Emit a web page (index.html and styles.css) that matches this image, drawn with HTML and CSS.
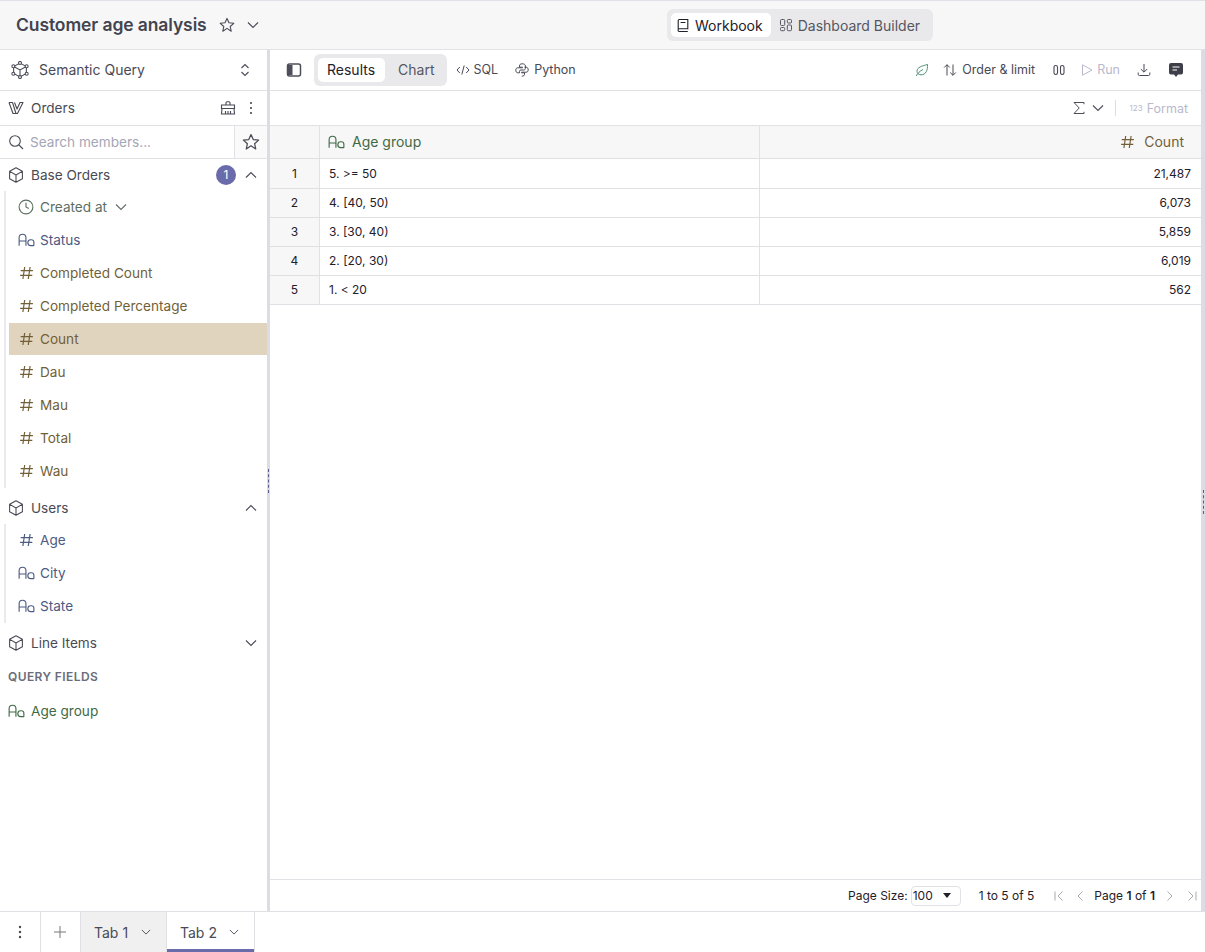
FILE: index.html
```html
<!DOCTYPE html>
<html lang="en">
<head>
  <meta charset="UTF-8">
  <title>Customer age analysis</title>
  <link rel="stylesheet" href="styles.css">
</head>
<body>
  <svg class="defs" width="0" height="0">
    <symbol id="i-hash" viewBox="0 0 16 16"><path d="M6.2 2 4.4 14M11.6 2 9.8 14M2.2 5.600h12.200M1.600 10.400h12.200" fill="none" stroke="currentColor" stroke-width="1.200"/></symbol>
    <symbol id="i-aa" viewBox="0 0 18 16"><path d="M1.200 14V5.500a3.600 3.600 0 0 1 7.200 0V14M1.200 9h7.200M16.800 14v-3.800a2.500 2.500 0 0 0-2.500-2.500h-.8a3.100 3.100 0 0 0 0 6.200h3.300" fill="none" stroke="currentColor" stroke-width="1.200"/></symbol>
    <symbol id="i-cube" viewBox="1 .5 14 15"><path d="M8 1.200 14 4.400v7.200L8 14.800l-6-3.200V4.400ZM2.200 4.600 8 8l5.800-3.400M8 8v6.600" fill="none" stroke="currentColor" stroke-width="1" stroke-linejoin="round"/></symbol>
    <symbol id="i-down" viewBox="0 0 12 12"><path d="M1 3.500l5 5 5-5" fill="none" stroke="currentColor" stroke-width="1.100"/></symbol>
    <symbol id="i-up" viewBox="0 0 12 12"><path d="M1 8.500l5-5 5 5" fill="none" stroke="currentColor" stroke-width="1.100"/></symbol>
    <symbol id="i-star" viewBox="0 0 16 16"><path d="M8 1.400l2 4.400 4.800.5-3.600 3.200 1 4.700L8 11.400l-4.200 2.800 1-4.700L1.200 6.300 6 5.800Z" fill="none" stroke="currentColor" stroke-width="1.100" stroke-linejoin="round"/></symbol>
  </svg>

  <header class="topbar">
    <div class="title-wrap">
      <h1 class="title">Customer age analysis</h1>
      <svg class="ico-16 star-top"><use href="#i-star"/></svg>
      <svg class="ico-12 chev-top"><use href="#i-down"/></svg>
    </div>
    <div class="seg seg-top">
      <div class="seg-item active">
        <svg class="ico-14" viewBox="0 0 14 14"><path d="M2.200 11V2.500a1 1 0 0 1 1-1h8.600v9.200H3.400a1.200 1.200 0 0 0 0 2.800h8.400M4.600 4.500h4.800" fill="none" stroke="currentColor" stroke-width="1.100"/></svg>
        Workbook
      </div>
      <div class="seg-item">
        <svg class="ico-14" viewBox="0 0 14 14"><g fill="none" stroke="currentColor" stroke-width="1"><rect x="1.500" y="1.500" width="4.200" height="6" rx="1"/><rect x="8.300" y="1.500" width="4.200" height="3.500" rx="1"/><rect x="1.500" y="9.500" width="4.200" height="3.200" rx="1"/><rect x="8.300" y="7" width="4.200" height="5.700" rx="1"/></g></svg>
        Dashboard Builder
      </div>
    </div>
  </header>

  <div class="workspace">
    <aside class="sidebar">
      <div class="sb-head">
        <svg class="ico-18" viewBox="1 .5 16 17"><g fill="none" stroke="currentColor" stroke-width="1"><path d="M9 2.500 15 5.700v6.600L9 15.500l-6-3.200V5.700ZM3 5.700 9 9l6-3.300M9 9v6.500"/><circle cx="9" cy="2.300" r="1.400" fill="#fff"/><circle cx="2.700" cy="5.500" r="1.400" fill="#fff"/><circle cx="15.300" cy="5.500" r="1.400" fill="#fff"/><circle cx="2.700" cy="12.500" r="1.400" fill="#fff"/><circle cx="15.300" cy="12.500" r="1.400" fill="#fff"/><circle cx="9" cy="15.700" r="1.400" fill="#fff"/></g></svg>
        <span class="sb-head-label">Semantic Query</span>
        <svg class="ico-12 updown" viewBox="0 0 12 14"><path d="M2.500 5 6 1.500 9.500 5M2.500 9 6 12.500 9.500 9" fill="none" stroke="currentColor" stroke-width="1.100"/></svg>
      </div>

      <div class="sb-model">
        <svg class="ico-16" viewBox="0 0 16 16"><path d="M1 2.500h3.500L8 13.500h1.500L15 2.500h-3l-3 6.500L6.500 2.500M1 2.500 5 13.500h3" fill="none" stroke="currentColor" stroke-width="1.100" stroke-linejoin="round"/></svg>
        <span class="sb-model-label">Orders</span>
        <svg class="ico-16 broom" viewBox="0 0 16 16"><path d="M6 5V2.800a1 1 0 0 1 1-1h2a1 1 0 0 1 1 1V5M1.500 5h13v3.500h-13ZM2 8.500 1.500 14h13L14 8.500M5.500 11v3M8 11v3M10.500 11v3" fill="none" stroke="currentColor" stroke-width="1.100"/></svg>
        <svg class="ico-16" viewBox="0 0 16 16"><g fill="currentColor"><circle cx="8" cy="3" r="1.100"/><circle cx="8" cy="8" r="1.100"/><circle cx="8" cy="13" r="1.100"/></g></svg>
      </div>

      <div class="sb-search">
        <div class="search-box">
          <svg class="ico-16" viewBox="0 0 16 16"><circle cx="7" cy="7" r="5.300" fill="none" stroke="currentColor" stroke-width="1.100"/><path d="M11 11l4 4" stroke="currentColor" stroke-width="1.100"/></svg>
          <span class="placeholder">Search members...</span>
        </div>
        <div class="search-star"><svg class="ico-18"><use href="#i-star"/></svg></div>
      </div>

      <div class="view-head view-first">
        <svg class="ico-16"><use href="#i-cube"/></svg>
        <span class="view-name">Base Orders</span>
        <span class="badge">1</span>
        <svg class="ico-12 view-chev"><use href="#i-up"/></svg>
      </div>
      <ul class="members">
        <li class="member time">
          <svg class="ico-16" viewBox="0 0 16 16"><circle cx="8" cy="8" r="6.900" fill="none" stroke="currentColor" stroke-width="1.100"/><path d="M8 3.800V8l2.800 1.600" fill="none" stroke="currentColor" stroke-width="1.100"/></svg>
          Created at
          <svg class="ico-12 member-chev"><use href="#i-down"/></svg>
        </li>
        <li class="member dim"><svg class="ico-type"><use href="#i-aa"/></svg>Status</li>
        <li class="member meas"><svg class="ico-type"><use href="#i-hash"/></svg>Completed Count</li>
        <li class="member meas"><svg class="ico-type"><use href="#i-hash"/></svg>Completed Percentage</li>
        <li class="member meas selected"><svg class="ico-type"><use href="#i-hash"/></svg>Count</li>
        <li class="member meas"><svg class="ico-type"><use href="#i-hash"/></svg>Dau</li>
        <li class="member meas"><svg class="ico-type"><use href="#i-hash"/></svg>Mau</li>
        <li class="member meas"><svg class="ico-type"><use href="#i-hash"/></svg>Total</li>
        <li class="member meas"><svg class="ico-type"><use href="#i-hash"/></svg>Wau</li>
      </ul>

      <div class="view-head">
        <svg class="ico-16"><use href="#i-cube"/></svg>
        <span class="view-name">Users</span>
        <svg class="ico-12 view-chev"><use href="#i-up"/></svg>
      </div>
      <ul class="members">
        <li class="member dim"><svg class="ico-type"><use href="#i-hash"/></svg>Age</li>
        <li class="member dim"><svg class="ico-type"><use href="#i-aa"/></svg>City</li>
        <li class="member dim"><svg class="ico-type"><use href="#i-aa"/></svg>State</li>
      </ul>

      <div class="view-head">
        <svg class="ico-16"><use href="#i-cube"/></svg>
        <span class="view-name">Line Items</span>
        <svg class="ico-12 view-chev"><use href="#i-down"/></svg>
      </div>

      <div class="sb-section">QUERY FIELDS</div>
      <div class="query-field"><svg class="ico-type"><use href="#i-aa"/></svg>Age group</div>
    </aside>

    <main class="main">
      <div class="toolbar">
        <svg class="ico-16 panel-ico" viewBox="0 0 16 16"><rect x="1.500" y="2" width="13" height="12" rx="2" fill="none" stroke="currentColor" stroke-width="1.500"/><path d="M2 3h4.500v10H2Z" fill="currentColor"/></svg>
        <div class="seg seg-tool">
          <div class="seg-item active">Results</div>
          <div class="seg-item">Chart</div>
        </div>
        <div class="tool tool-sql">
          <svg class="ico-14" viewBox="0 0 14 14"><path d="M3.800 4 1 7l2.800 3M10.200 4 13 7l-2.800 3M8.200 2.500 5.800 11.500" fill="none" stroke="currentColor" stroke-width="1"/></svg>
          SQL
        </div>
        <div class="tool tool-py">
          <svg class="ico-14" viewBox="0 0 14 14"><g fill="none" stroke="currentColor" stroke-width="1"><path id="snake" d="M7.200.8C5.400.8 4.500 1.500 4.500 2.800v1.400H7.500v.6H2.800C1.500 4.800.8 5.700.8 7.200s.7 2.600 2 2.600h1.700V8.300C4.500 7.500 5.100 7 5.900 7h2.800c.9 0 1.700-.7 1.700-1.600V2.800C10.400 1.500 9 .8 7.200.8Z"/><path d="M6.800 13.200c1.800 0 2.700-.7 2.700-2v-1.400H6.500v-.6h4.700c1.300 0 2-.9 2-2.400s-.7-2.600-2-2.600H9.500"/></g></svg>
          Python
        </div>
        <div class="toolbar-right">
          <svg class="ico-14 leaf" viewBox="0 0 14 14"><path d="M12.500 1.500C12.800 7 11 11.800 6 11.800c-2.500 0-4-1.600-4-3.600 0-4 5-5.200 10.500-6.700ZM1.200 13c1.500-3 3.800-5 6.800-6.500" fill="none" stroke="currentColor" stroke-width="1"/></svg>
          <div class="tool tool-order">
            <svg class="ico-14" viewBox="0 0 14 14"><path d="M4 12.500V1.800M1.200 4.500 4 1.700l2.800 2.800M10 1.500v10.700M7.200 9.500l2.800 2.800 2.800-2.800" fill="none" stroke="currentColor" stroke-width="1"/></svg>
            Order &amp; limit
          </div>
          <svg class="ico-14 cols" viewBox="0 0 14 14"><g fill="none" stroke="currentColor" stroke-width="1.100"><rect x="2" y="2.500" width="3.500" height="9" rx="1.700"/><rect x="8.500" y="2.500" width="3.500" height="9" rx="1.700"/></g></svg>
          <div class="tool tool-run">
            <svg class="ico-14" viewBox="0 0 14 14"><path d="M2.500 1.800 12 7l-9.500 5.200Z" fill="none" stroke="currentColor" stroke-width="1"/></svg>
            Run
          </div>
          <svg class="ico-14 dl" viewBox="0 0 14 14"><path d="M7 1v8M3.800 6 7 9.200 10.200 6M1.200 9.500v1.800c0 .8.500 1.200 1.200 1.200h9.200c.7 0 1.200-.4 1.200-1.200V9.500" fill="none" stroke="currentColor" stroke-width="1"/></svg>
          <svg class="ico-16 chat" viewBox="0 0 16 16"><path d="M3 1h10a2 2 0 0 1 2 2v7.500a2 2 0 0 1-2 2h-3L8 15l-2-2.500H3a2 2 0 0 1-2-2V3a2 2 0 0 1 2-2Z" fill="currentColor"/><path d="M4.500 5h7M4.500 8h4.500" stroke="#fff" stroke-width="1.200"/></svg>
        </div>
      </div>

      <div class="subbar">
        <svg class="ico-14 sigma" viewBox="0 0 14 14"><path d="M12 3.200V1.500H2l5.200 5.500L2 12.500h10v-1.700" fill="none" stroke="currentColor" stroke-width="1"/></svg>
        <svg class="ico-12 sigma-chev"><use href="#i-down"/></svg>
        <span class="sub-sep"></span>
        <span class="fmt-123">123</span>
        <span class="fmt-label">Format</span>
      </div>

      <div class="grid">
        <div class="grid-head">
          <div class="cell idx"></div>
          <div class="cell col-a head-a"><svg class="ico-type"><use href="#i-aa"/></svg>Age group</div>
          <div class="cell col-b head-b"><svg class="ico-type"><use href="#i-hash"/></svg>Count</div>
        </div>
        <div class="grid-row"><div class="cell idx">1</div><div class="cell col-a">5. &gt;= 50</div><div class="cell col-b">21,487</div></div>
        <div class="grid-row"><div class="cell idx">2</div><div class="cell col-a">4. [40, 50)</div><div class="cell col-b">6,073</div></div>
        <div class="grid-row"><div class="cell idx">3</div><div class="cell col-a">3. [30, 40)</div><div class="cell col-b">5,859</div></div>
        <div class="grid-row"><div class="cell idx">4</div><div class="cell col-a">2. [20, 30)</div><div class="cell col-b">6,019</div></div>
        <div class="grid-row"><div class="cell idx">5</div><div class="cell col-a">1. &lt; 20</div><div class="cell col-b">562</div></div>
      </div>

      <div class="pager">
        <span>Page Size:</span>
        <span class="page-select">100<i class="caret"></i></span>
        <span class="page-count">1 to 5 of 5</span>
        <svg class="ico-12 page-first" viewBox="0 0 12 12"><path d="M2 1.500v9M9.500 1.500 5 6l4.500 4.500" fill="none" stroke="currentColor" stroke-width="1"/></svg>
        <svg class="ico-12 page-prev" viewBox="0 0 12 12"><path d="M8.500 1.500 4 6l4.500 4.500" fill="none" stroke="currentColor" stroke-width="1"/></svg>
        <span class="page-label">Page <b>1</b> of <b>1</b></span>
        <svg class="ico-12 page-next" viewBox="0 0 12 12"><path d="M3.500 1.500 8 6l-4.500 4.500" fill="none" stroke="currentColor" stroke-width="1"/></svg>
        <svg class="ico-12 page-last" viewBox="0 0 12 12"><path d="M10 1.500v9M2.500 1.500 7 6l-4.500 4.500" fill="none" stroke="currentColor" stroke-width="1"/></svg>
      </div>
    </main>
  </div>

  <footer class="tabbar">
    <div class="tab-btn"><svg class="ico-16" viewBox="0 0 16 16"><g fill="currentColor"><circle cx="8" cy="3" r="1.200"/><circle cx="8" cy="8" r="1.200"/><circle cx="8" cy="13" r="1.200"/></g></svg></div>
    <div class="tab-btn tab-add"><svg class="ico-14" viewBox="0 0 14 14"><path d="M7 1v12M1 7h12" stroke="currentColor" stroke-width="1"/></svg></div>
    <div class="tab">Tab 1<svg class="tab-chev"><use href="#i-down"/></svg></div>
    <div class="tab tab-active">Tab 2<svg class="tab-chev"><use href="#i-down"/></svg></div>
  </footer>
</body>
</html>
```

FILE: styles.css
```css
* { box-sizing: border-box; }
html, body { height: 100%; }
body {
  margin: 0;
  height: 952px;
  display: flex;
  flex-direction: column;
  overflow: hidden;
  background: #fff;
  font-family: Inter, "Liberation Sans", sans-serif;
  font-size: 14px;
  color: #494a55;
}
.defs { position: absolute; }
svg { display: block; flex: none; }
.ico-12 { width: 12px; height: 12px; }
.ico-14 { width: 14px; height: 14px; }
.ico-16 { width: 16px; height: 16px; }
.ico-18 { width: 18px; height: 18px; }
.ico-type { width: 17px; height: 16px; }

/* top bar */
.topbar {
  height: 50px;
  flex: none;
  display: flex;
  align-items: center;
  position: relative;
  background: #f7f7f8;
  border-top: 1px solid #dfe0e8;
  border-bottom: 1px solid #e2e2e6;
  padding-left: 16px;
}
.title-wrap { display: flex; align-items: center; }
.title { margin: 0 0 2px; font-size: 17.5px; font-weight: 600; color: #43444f; letter-spacing: -0.1px; }
.star-top { margin-left: 12px; }
.chev-top { margin-left: 12px; }
.seg { display: flex; background: #e9e9ec; border-radius: 6px; }
.seg-top {
  position: absolute;
  left: 667px;
  top: 8px;
  height: 32px;
  padding: 4px;
  gap: 3px;
}
.seg-item {
  display: flex;
  align-items: center;
  gap: 5px;
  padding: 0 8px 0 5px;
  border-radius: 5px;
  color: #55565f;
}
.seg-item + .seg-item { padding-right: 9px; }
.seg-item.active { background: #fff; color: #1f2029; }

/* layout */
.workspace { flex: 1; display: flex; min-height: 0; }
.sidebar {
  width: 270px;
  flex: none;
  position: relative;
  border-right: 3px solid #dcdce4;
  background: #fff;
}
.sidebar::after {
  content: "";
  position: absolute;
  right: -2px;
  top: 419px;
  height: 24px;
  border-left: 1px dashed #5a5b8c;
}
.main {
  flex: 1;
  min-width: 0;
  position: relative;
  display: flex;
  flex-direction: column;
  border-right: 4px solid #dcdce4;
}
.main::after {
  content: "";
  position: absolute;
  right: -3px;
  top: 440px;
  height: 24px;
  border-left: 1px dashed #5a5b8c;
}

/* sidebar */
.sb-head {
  height: 41px;
  display: flex;
  align-items: center;
  padding: 0 16px 1px 11px;
  border-bottom: 1px solid #e2e2e6;
}
.sb-head-label { margin-left: 10px; flex: 1; }
.updown { height: 14px; }
.sb-model, .sb-search, .view-head, .member, .query-field { font-size: 13.6px; }
.sb-model {
  height: 35px;
  display: flex;
  align-items: center;
  padding: 0 8px;
  border-bottom: 1px solid #e2e2e6;
}
.sb-model-label { margin-left: 7px; flex: 1; }
.broom { margin-right: 7px; }
.sb-search { height: 33px; display: flex; border-bottom: 1px solid #e2e2e6; }
.search-box {
  flex: 1;
  display: flex;
  align-items: center;
  gap: 6px;
  padding-left: 8px;
  border-right: 1px solid #e2e2e6;
}
.placeholder { color: #a5a6b5; }
.search-star {
  width: 32px;
  display: flex;
  align-items: center;
  justify-content: center;
  background: #fafafa;
}
.view-head {
  height: 32px;
  margin-top: 4px;
  display: flex;
  align-items: center;
  padding: 0 10px 0 8px;
}
.view-first { margin-top: 0; }
.view-name { margin-left: 7px; flex: 1; }
.badge {
  width: 20px;
  height: 20px;
  margin-right: 9px;
  border-radius: 50%;
  background: #6a6bab;
  color: #fff;
  font-size: 12px;
  line-height: 20px;
  text-align: center;
}
.members {
  list-style: none;
  margin: 0 0 0 4px;
  padding: 0;
  border-left: 2px solid #e9e9ee;
}
.member {
  height: 33px;
  margin-left: 3px;
  padding: 0 0 1px 9px;
  display: flex;
  align-items: center;
  gap: 5px;
}
.member.time { color: #5c6e62; gap: 6px; }
.member.dim { color: #4d5a82; }
.member.meas { color: #725f37; }
.member.selected { background: #e0d4bf; height: 32px; padding-bottom: 0; margin-bottom: 1px; }
.member-chev { margin-left: 2px; }
.sb-section {
  height: 34px;
  padding: 10px 8px 0;
  font-size: 12px;
  font-weight: 600;
  letter-spacing: 0.4px;
  color: #6b6c7a;
}
.query-field {
  height: 34px;
  padding: 10px 8px 0;
  display: flex;
  align-items: flex-start;
  gap: 6px;
  color: #3f6a45;
}

/* toolbars */
.toolbar {
  height: 41px;
  flex: none;
  display: flex;
  align-items: center;
  padding: 0 17px 1px 16px;
  border-bottom: 1px solid #e2e2e6;
  font-size: 12.5px;
}
.panel-ico { color: #4d4e59; }
.seg-tool {
  height: 32px;
  margin-left: 12px;
  padding: 4px;
  font-size: 14px;
}
.seg-tool .seg-item { padding: 0 10px 0 9px; }
.seg-tool .seg-item + .seg-item { padding: 0 8px 0 13px; }
.tool { display: flex; align-items: center; gap: 4px; }
.tool-sql { margin-left: 9px; }
.tool-py { margin-left: 17px; gap: 5px; }
.toolbar-right { margin-left: auto; display: flex; align-items: center; }
.leaf { color: #4d9274; }
.tool-order { margin-left: 14px; gap: 5px; }
.cols { margin-left: 17px; }
.tool-run { margin-left: 14px; gap: 3px; color: #b8b9cc; }
.dl { margin-left: 17px; }
.chat { margin-left: 17px; color: #3d3e49; }
.subbar {
  height: 35px;
  flex: none;
  display: flex;
  align-items: center;
  justify-content: flex-end;
  padding-right: 13px;
  border-bottom: 1px solid #e2e2e6;
  font-size: 12.5px;
  color: #b8b9cc;
}
.sigma, .sigma-chev { color: #4d4e59; }
.sigma-chev { margin-left: 6px; }
.sub-sep { width: 1px; height: 16px; margin: 0 14px 0 11px; background: #dcdce4; }
.fmt-123 { font-size: 8px; margin-right: 4px; }

/* grid */
.grid { flex: 1; font-size: 12px; color: #1f2029; }
.grid-head, .grid-row { display: flex; border-bottom: 1px solid #dfdfe4; }
.grid-head { height: 33px; background: #f7f7f8; font-size: 14px; }
.grid-row { height: 29px; }
.grid-head + .grid-row { height: 30px; }
.cell { display: flex; align-items: center; padding-bottom: 1px; border-right: 1px solid #e2e2e6; }
.idx { width: 50px; justify-content: center; background: #f7f7f8; }
.col-a { width: 440px; padding-left: 9px; }
.col-b { flex: 1; justify-content: flex-end; padding-right: 10px; border-right: 0; }
.head-a { color: #3f6a45; gap: 7px; padding-left: 8px; }
.head-b { color: #725f37; gap: 8px; padding-right: 17px; }

/* pager */
.pager {
  height: 32px;
  flex: none;
  display: flex;
  align-items: center;
  justify-content: flex-end;
  padding-right: 3px;
  border-top: 1px solid #e2e2e6;
  font-size: 12px;
  color: #1f2029;
}
.page-select {
  width: 50px;
  height: 20px;
  margin-left: 3px;
  padding-left: 1px;
  display: flex;
  align-items: center;
  justify-content: space-between;
  border: 1px solid #e2e2e6;
  border-radius: 4px;
}
.caret {
  width: 0;
  height: 0;
  margin-right: 9px;
  border-left: 4px solid transparent;
  border-right: 4px solid transparent;
  border-top: 5px solid #1f2029;
}
.page-count { margin-left: 18px; }
.page-first, .page-prev, .page-next, .page-last { color: #a9aab2; }
.page-first { margin-left: 19px; }
.page-prev { margin-left: 9px; }
.page-label { margin: 0 9px 0 8px; }
.page-label b { font-weight: 600; }
.page-last { margin-left: 10px; }

/* tabs */
.tabbar {
  height: 41px;
  flex: none;
  display: flex;
  border-top: 1px solid #dfdfe4;
  background: #fff;
}
.tab-btn {
  width: 41px;
  display: flex;
  align-items: center;
  justify-content: center;
  border-right: 1px solid #dfdfe4;
}
.tab-add { width: 40px; color: #777; padding-right: 1px; }
.tab {
  width: 86px;
  display: flex;
  align-items: center;
  gap: 13px;
  padding-left: 13px;
  border-right: 1px solid #dfdfe4;
  background: #f0f0f1;
}
.tab-active { width: 88px; gap: 12px; background: #fff; box-shadow: inset 0 -3px 0 #6a6bab; }
.tab-chev { width: 10px; height: 10px; }
```
